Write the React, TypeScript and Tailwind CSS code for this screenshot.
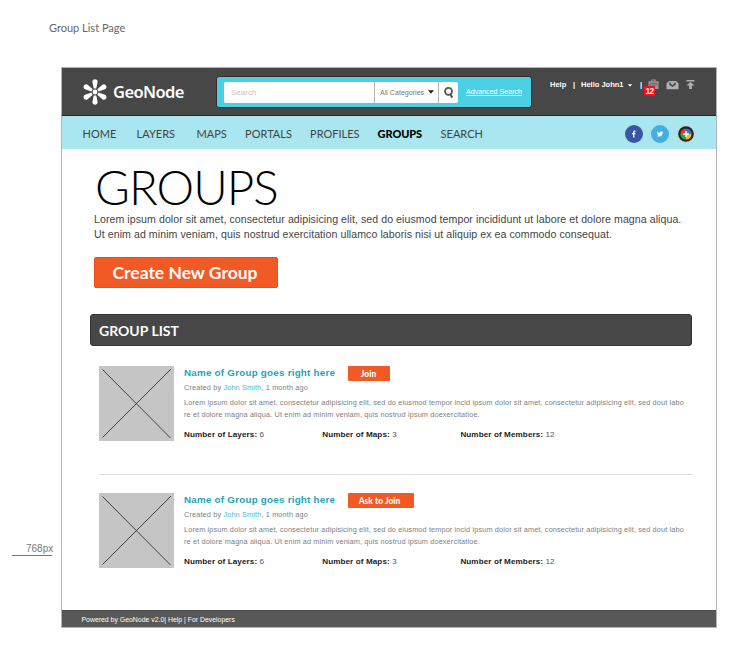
import React from "react";

const ARIAL = "font-['Liberation_Sans',Arial,sans-serif]";
const LATO = "font-['Lato',sans-serif]";

function Logo() {
  return (
    <svg className="block h-[26px] w-[26px]" viewBox="-13 -13 26 26">
      {[0, 60, 120, 180, 240, 300].map((a) => (
        <path
          key={a}
          transform={`rotate(${a})`}
          d="M-1.3 -3.4 L-2.6 -10 C-3 -13.7 3 -13.7 2.6 -10 L1.3 -3.4 Z"
          fill="#fff"
        />
      ))}
      <circle r="2.4" fill="#fff" />
    </svg>
  );
}

function Caret({ className }: { className: string }) {
  return (
    <svg className={className} viewBox="0 0 6 4">
      <path d="M0 0.3H6L3 3.8Z" fill="currentColor" />
    </svg>
  );
}

function Header() {
  return (
    <header className="flex h-[48px] border-b border-[#3b1a12] bg-[#474747] pl-[20px]">
      <div className="flex w-[134px] pt-[11px]">
        <Logo />
        <span className="ml-[5px] mt-[1px] whitespace-nowrap font-['Noto_Sans',sans-serif] text-[16.5px] font-semibold leading-[24px] tracking-[-0.6px] text-white">
          GeoNode
        </span>
      </div>
      <div className="mt-[8px] flex h-[32px] w-[316px] rounded-[3px] border border-[#3a2a26] bg-[#4bd0e3] pl-[7px] pt-[5px]">
        <div className={`flex h-[21px] w-[234px] rounded-[2px] bg-white ${ARIAL}`}>
          <div className="w-[150px] pl-[7px] text-[8px] leading-[21px] text-[#c4c4c4]">Search</div>
          <div className="flex w-[65px] border-x border-[#b5b5b5] pl-[5px] text-[7.1px] leading-[22px] text-[#777]">
            <span className="w-[48px] whitespace-nowrap">All Categories</span>
            <Caret className="mt-[8px] h-[4px] w-[6px] text-[#222]" />
          </div>
          <svg className="ml-[4px] mt-[4px] h-[13px] w-[12px]" viewBox="0 0 12 13">
            <circle cx="5.5" cy="5.3" r="3.5" fill="none" stroke="#555" strokeWidth="1.8" />
            <path d="M7.3 8.2L9.3 11.6" stroke="#555" strokeWidth="2.1" />
          </svg>
        </div>
        <span className={`ml-[8px] whitespace-nowrap text-[7.1px] leading-[21px] text-white underline ${ARIAL}`}>
          Advanced Search
        </span>
      </div>
      <div className={`flex whitespace-nowrap pl-[18px] pt-[11px] text-[7.5px] font-bold leading-[12px] text-white ${ARIAL}`}>
        <span className="w-[23px]">Help</span>
        <span className="w-[8px]">|</span>
        <span className="w-[46px]">Hello John1</span>
        <Caret className="mt-[5px] h-[3px] w-[6px]" />
        <span className="ml-[7px] w-[8px]">|</span>
        <div className="relative h-[17px] w-[11px]">
          <svg className="h-[11px] w-[11px]" viewBox="0 0 11 11">
            <path d="M3.8 2.5V1H7.2V2.5" fill="none" stroke="#9d9d9d" strokeWidth="1.1" />
            <path d="M0.5 2.3H10.5V10H0.5Z" fill="#9d9d9d" />
            <path d="M2 4.3H9M1 6H10" stroke="#555" strokeWidth="0.8" />
          </svg>
          <span className="absolute left-[-4px] top-[7px] h-[10px] w-[11px] bg-[#f00f1c] text-center text-[8.3px] leading-[10px] tracking-[-0.5px]">
            12
          </span>
        </div>
        <svg className="ml-[7px] h-[12px] w-[13px]" viewBox="0 0 13 12">
          <path d="M3 2H10L12.5 4.5V10.2H0.5V4.5Z" fill="#b0b0b0" />
          <path d="M3.2 3.4H9.8V5.8L6.5 8.1L3.2 5.8Z" fill="#474747" />
          <path d="M4.6 3.2H8.4V4.8L6.5 6L4.6 4.8Z" fill="#b0b0b0" />
        </svg>
        <svg className="ml-[7px] h-[11px] w-[9px]" viewBox="0 0 9 11">
          <path d="M0.5 0.9H8.5V2.4H0.5ZM4.5 2.9L8.7 6.5H5.9V10H3.1V6.5H0.3Z" fill="#b0b0b0" />
        </svg>
      </div>
    </header>
  );
}

function Social() {
  return (
    <div className="ml-auto mt-[9px] flex gap-[8px] pr-[21px]">
      <svg className="h-[18px] w-[18px]" viewBox="0 0 18 18">
        <circle cx="9" cy="9" r="9" fill="#3b56a0" />
        <path d="M8.1 12.4V9.3H7.1V8.1H8.1V7.3C8.1 6.1 8.8 5.6 9.7 5.6H10.5V6.8H10C9.6 6.8 9.4 7 9.4 7.4V8.1H10.5L10.3 9.3H9.4V12.4Z" fill="#fff" />
      </svg>
      <svg className="h-[18px] w-[18px]" viewBox="0 0 18 18">
        <circle cx="9" cy="9" r="9" fill="#43aee0" />
        <path d="M6.3 6.6C7 7.5 7.9 7.9 8.9 8C8.6 6.6 10.3 6 11.1 6.9L12.1 6.6L11.7 7.4L12.3 7.4L11.6 8.1C11.6 10.5 8.9 12.6 5.9 11.1C6.6 11.1 7.2 10.9 7.6 10.6C7 10.5 6.6 10.1 6.5 9.6H7.1C6.5 9.3 6.2 8.9 6.2 8.3L6.7 8.4C6.1 7.9 6 7.2 6.3 6.6Z" fill="#fff" />
      </svg>
      <svg className="h-[18px] w-[18px]" viewBox="0 0 18 18">
        <circle cx="9" cy="9" r="8.6" fill="#cfcfcf" />
        <circle cx="9" cy="9" r="7.8" fill="#262626" />
        <path d="M9 9V3.4A5.6 5.6 0 0 0 3.4 9Z" fill="#e23b2e" />
        <path d="M9 9H14.6A5.6 5.6 0 0 0 9 3.4Z" fill="#3a73e0" />
        <path d="M9 9V14.6A5.6 5.6 0 0 0 14.6 9Z" fill="#f3b81b" />
        <path d="M9 9H3.4A5.6 5.6 0 0 0 9 14.6Z" fill="#2fa34c" />
        <path d="M9 6.2V11.8M6.2 9H11.8" stroke="#fff" strokeWidth="1.7" />
      </svg>
    </div>
  );
}

function Nav() {
  return (
    <nav className={`flex h-[33px] whitespace-nowrap bg-[#a9e6ef] pl-[20.6px] text-[11px] leading-[36px] text-[#444] ${LATO}`}>
      <a className="w-[54px]">HOME</a>
      <a className="w-[60px]">LAYERS</a>
      <a className="w-[48.5px]">MAPS</a>
      <a className="w-[65px]">PORTALS</a>
      <a className="w-[67.5px]">PROFILES</a>
      <a className="w-[63px] font-black tracking-[-0.1px] text-black">GROUPS</a>
      <a>SEARCH</a>
      <Social />
    </nav>
  );
}

function Thumb() {
  return (
    <svg className="block h-[75px] w-[75px] bg-[#c5c5c5]" viewBox="0 0 75 75">
      <path d="M3.5 3.5L71.5 72M72 3L3.5 71.5" stroke="#333" strokeWidth="0.9" />
    </svg>
  );
}

function Stat({ label, value }: { label: string; value: string }) {
  return (
    <span className="w-[138.2px]">
      <b className="font-bold text-[#222]">{label}</b> {value}
    </span>
  );
}

function Group({ action, wide }: { action: string; wide?: boolean }) {
  return (
    <article className={`flex whitespace-nowrap text-[#808080] ${ARIAL}`}>
      <Thumb />
      <div className="ml-[10px]">
        <div className="flex h-[16px]">
          <h3 className="w-[163.5px] text-[9.8px] font-bold leading-[14px] tracking-[0.24px] text-[#1fa3b7]">
            Name of Group goes right here
          </h3>
          <button
            className={`h-[15px] rounded-[1px] bg-[#f15a24] text-center text-[8.5px] font-black leading-[16px] text-white ${LATO} ${wide ? "w-[66px] pr-[2px]" : "w-[42px]"}`}
          >
            {action}
          </button>
        </div>
        <p className="text-[7.3px] leading-[11px] tracking-[0.15px]">
          Created by <span className="text-[#4db5c9]">John Smith</span>, 1 month ago
        </p>
        <p className="mt-[4px] text-[7.3px] leading-[11.5px] tracking-[0.138px]">
          Lorem ipsum dolor sit amet, consectetur adipisicing elit, sed do eiusmod tempor incid ipsum dolor sit amet, consectetur adipisicing elit, sed dout labo
          <br />
          re et dolore magna aliqua. Ut enim ad minim veniam, quis nostrud ipsum doexercitatioe.
        </p>
        <div className="mt-[9px] flex text-[8.1px] leading-[12px] tracking-[0.1px] text-[#555]">
          <Stat label="Number of Layers:" value="6" />
          <Stat label="Number of Maps:" value="3" />
          <Stat label="Number of Members:" value="12" />
        </div>
      </div>
    </article>
  );
}

function Content() {
  return (
    <main className="h-[461px] pl-[28px]">
      <h1 className={`h-[63px] pl-[5px] pt-[8px] text-[47.5px] font-light leading-[59px] tracking-[-1px] text-black ${LATO}`}>GROUPS</h1>
      <p className={`whitespace-nowrap pl-[4px] text-[10.6px] leading-[15px] tracking-[0.064px] text-[#444] ${ARIAL}`}>
        Lorem ipsum dolor sit amet, consectetur adipisicing elit, sed do eiusmod tempor incididunt ut labore et dolore magna aliqua.
        <br />
        Ut enim ad minim veniam, quis nostrud exercitation ullamco laboris nisi ut aliquip ex ea commodo consequat.
      </p>
      <button className={`ml-[4px] mt-[15px] block h-[31px] w-[184px] rounded-[2px] border border-[#f0491a] bg-[#f15a24] pr-[2px] text-center text-[17.5px] font-bold leading-[29px] text-white ${LATO}`}>
        Create New Group
      </button>
      <h2 className={`mt-[26px] h-[32px] w-[602px] rounded-[3px] border border-[#333] bg-[#474747] pl-[8px] text-[14px] font-bold leading-[32px] text-white ${LATO}`}>
        GROUP LIST
      </h2>
      <section className="ml-[9px] mt-[20px] w-[593px]">
        <div className="mb-[18px] h-[109px] border-b border-[#dcdcdc]">
          <Group action="Join" />
        </div>
        <Group action="Ask to Join" wide />
      </section>
    </main>
  );
}

export default function App() {
  return (
    <div className="h-[662px] w-[750px] overflow-hidden bg-white">
      <div className={`h-[67px] pl-[49px] pt-[20px] text-[11px] leading-[15px] text-[#666] ${LATO}`}>Group List Page</div>
      <div className="flex">
        <aside className="w-[61px] pl-[12px] pt-[475px]">
          <div className={`h-[14px] w-[40px] border-b border-[#777] pl-[14px] text-[10px] leading-[13px] text-[#777] ${ARIAL}`}>768px</div>
        </aside>
        <div className="w-[656px] border border-[#b5b5b5]">
          <Header />
          <Nav />
          <Content />
          <footer className={`h-[17px] border-t border-[#4a4a4a] bg-[#585858] pl-[19.5px] text-[6.9px] leading-[17px] text-white ${ARIAL}`}>
            Powered by GeoNode v2.0| Help | For Developers
          </footer>
        </div>
      </div>
    </div>
  );
}
